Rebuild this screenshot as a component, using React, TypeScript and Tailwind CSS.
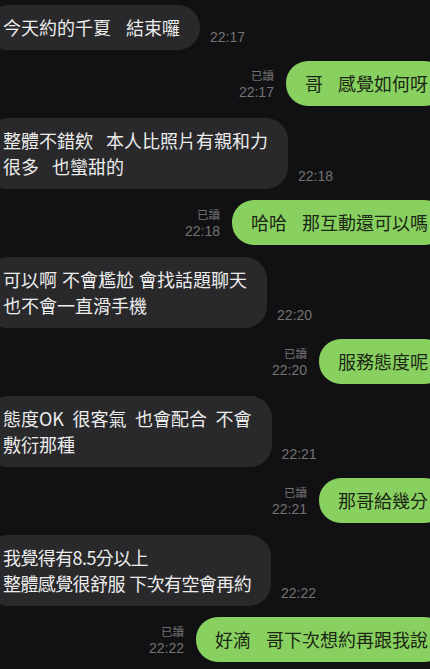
import React from "react";

type Msg =
  | { side: "left"; lines: string[]; time: string; fit: string }
  | { side: "right"; text: string; time: string };

// fit: word/letter spacing per bubble, so the widths follow the screenshot
const messages: Msg[] = [
  { side: "left", lines: ["今天約的千夏 結束囉"], time: "22:17", fit: "[word-spacing:11px]" },
  { side: "right", text: "哥 感覺如何呀", time: "22:17" },
  { side: "left", lines: ["整體不錯欸 本人比照片有親和力", "很多 也蠻甜的"], time: "22:18", fit: "[word-spacing:9px]" },
  { side: "right", text: "哈哈 那互動還可以嗎", time: "22:18" },
  { side: "left", lines: ["可以啊 不會尷尬 會找話題聊天", "也不會一直滑手機"], time: "22:20", fit: "[word-spacing:1px]" },
  { side: "right", text: "服務態度呢", time: "22:20" },
  { side: "left", lines: ["態度OK 很客氣 也會配合 不會", "敷衍那種"], time: "22:21", fit: "[word-spacing:4.5px]" },
  { side: "right", text: "那哥給幾分", time: "22:21" },
  { side: "left", lines: ["我覺得有8.5分以上", "整體感覺很舒服 下次有空會再約"], time: "22:22", fit: "[word-spacing:1px] tracking-[-0.6px]" },
  { side: "right", text: "好滴 哥下次想約再跟我說", time: "22:22" },
];

const cjk = { fontFamily: '"Noto Sans CJK TC", "Noto Sans CJK SC", sans-serif' };
const meta = { fontFamily: '"Liberation Sans", "Noto Sans CJK TC", sans-serif' };

export default function App() {
  return (
    <div className="w-[430px] h-[669px] overflow-hidden bg-[#111113]" style={cjk}>
      <div className="flex flex-col gap-[11.5px] pt-[5px]">
        {messages.map((m, i) =>
          m.side === "left" ? (
            <div key={i} className="flex items-end">
              <div className={"ml-[-14px] pl-[17px] pr-[20px] py-[9px] rounded-[22px] bg-[#29292b] text-[#ececec] text-[18px] leading-[26.5px] " + m.fit}>
                {m.lines.map((l, j) => (
                  <div key={j} className="whitespace-nowrap">{l}</div>
                ))}
              </div>
              <div className="ml-[10px] mb-[5px] text-[14px] leading-[16px] text-[#737373]" style={meta}>
                {m.time}
              </div>
            </div>
          ) : (
            <div key={i} className="flex items-end justify-end">
              <div className="mr-[12px] mb-[5px] flex flex-col items-end text-[#737373]">
                <div className="text-[11.5px] leading-[16px]" style={cjk}>已讀</div>
                <div className="text-[14px] leading-[18px]" style={meta}>{m.time}</div>
              </div>
              <div className="mr-[-16px] pl-[19px] pr-[18px] py-[9px] rounded-[22px] bg-[#88d160] text-[#1b2614] text-[18px] leading-[27px] whitespace-nowrap [word-spacing:11px]">
                {m.text}
              </div>
            </div>
          )
        )}
      </div>
    </div>
  );
}
